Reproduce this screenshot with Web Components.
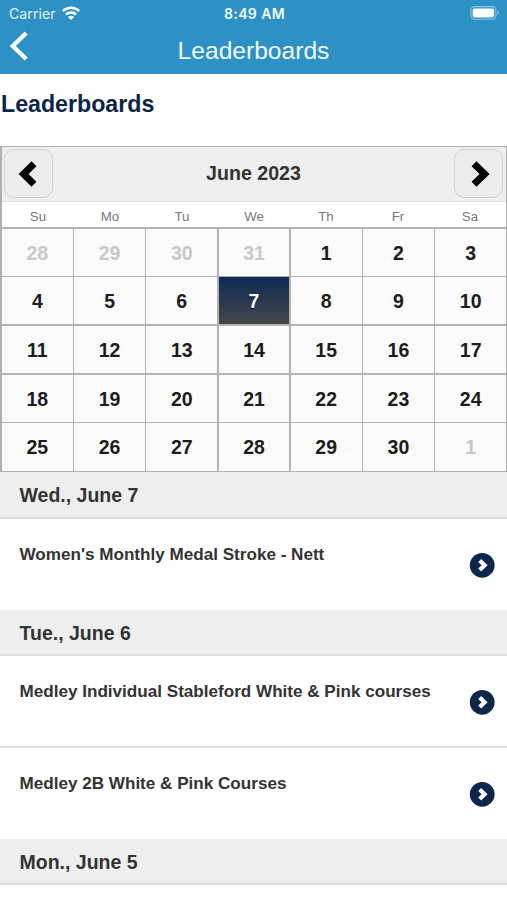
<!DOCTYPE html>
<html lang="en">
<head>
<meta charset="utf-8">
<meta name="viewport" content="width=device-width, initial-scale=1">
<title>Leaderboards</title>
<style>
    body {
        margin: 0;
        height: 900px;
        overflow: hidden;
        background: #fff;
        color: #333;
        font-family: "Liberation Sans", Arial, sans-serif;
    }
</style>
</head>
<body>
    <app-header>Leaderboards</app-header>
    <page-title>Leaderboards</page-title>
    <month-calendar first="28" previous="31" days="30" selected="7">June 2023</month-calendar>
    <day-group label="Wed., June 7">
        <event-row>Women's Monthly Medal Stroke - Nett</event-row>
    </day-group>
    <day-group label="Tue., June 6">
        <event-row>Medley Individual Stableford White &amp; Pink courses</event-row>
        <event-row>Medley 2B White &amp; Pink Courses</event-row>
    </day-group>
    <day-group label="Mon., June 5"></day-group>

<script>
class AppHeader extends HTMLElement {
    constructor() {
        super();
        this.attachShadow({ mode: 'open' });
        this.shadowRoot.innerHTML = `
            <style>
                :host {
                    display: block;
                    box-sizing: border-box;
                    height: 74px;
                    background: #2e91c5;
                    color: #fff;
                }
                svg { display: block; }
                .status, .bar {
                    display: grid;
                    grid-template-columns: 1fr auto 1fr;
                    align-items: center;
                }
                .status {
                    height: 27px;
                    padding: 0 7px 0 9px;
                    font: 14px/27px Inter, sans-serif;
                }
                .carrier { display: flex; align-items: center; gap: 6px; letter-spacing: 0.12px; color: #e4f5fc; }
                .carrier svg { margin-top: -2px; }
                .time { font-weight: 600; font-size: 14px; letter-spacing: 0.4px; color: #effaff; }
                .battery { justify-self: end; margin-top: -1px; }
                .bar { height: 47px; padding: 0 9px; }
                .back { align-self: start; padding-top: 4px; }
                .title { font-size: 24.6px; line-height: 47px; color: #f2fbff; }
            </style>
            <div class="status">
                <div class="carrier">
                    <span>Carrier</span>
                    <svg width="18" height="14" viewBox="0 0 18 14" fill="none" stroke="#fff" stroke-width="2.5">
                        <path d="M.8 5.1a11.6 11.6 0 0 1 16.4 0M3.9 8.5a7.2 7.2 0 0 1 10.2 0"/>
                        <path d="M9 14 6 11a4.2 4.2 0 0 1 6 0Z" fill="#fff" stroke="none"/>
                    </svg>
                </div>
                <div class="time">8:49 AM</div>
                <svg class="battery" width="30" height="14" viewBox="0 0 30 14">
                    <rect x=".9" y=".6" width="25" height="12.6" rx="3.6" fill="none" stroke="#8cc5e3" stroke-width="1.1"/>
                    <rect x="2.7" y="2.4" width="21.4" height="9" rx="1.8" fill="#fff"/>
                    <path d="M27.4 4.7v4.4c1.9-.7 1.9-3.7 0-4.4Z" fill="#8cc5e3"/>
                </svg>
            </div>
            <div class="bar">
                <svg class="back" width="20" height="30" viewBox="0 0 20 30" fill="none" stroke="#fff" stroke-width="4.2">
                    <path d="M17.2 2 3.8 15 17.2 28"/>
                </svg>
                <div class="title"><slot></slot></div>
            </div>
        `;
    }
}

class PageTitle extends HTMLElement {
    constructor() {
        super();
        this.attachShadow({ mode: 'open' });
        this.shadowRoot.innerHTML = `
            <style>
                :host {
                    display: block;
                    box-sizing: border-box;
                    height: 72px;
                    padding: 16px 0 0 1px;
                    font-size: 23.2px;
                    line-height: 28px;
                    font-weight: bold;
                    color: #0c2448;
                }
            </style>
            <slot></slot>
        `;
    }
}

class MonthCalendar extends HTMLElement {
    constructor() {
        super();
        this.attachShadow({ mode: 'open' });
        this.shadowRoot.innerHTML = `
            <style>
                :host {
                    display: block;
                    box-sizing: border-box;
                    height: 326px;
                    border: solid #b0b0b0;
                    border-width: 1px 1px 0 2px;
                }
                .head {
                    display: flex;
                    align-items: center;
                    justify-content: space-between;
                    box-sizing: border-box;
                    height: 55px;
                    padding: 0 3px 1px 2px;
                    background: #eee;
                    border-bottom: 1px solid #ddd;
                    font-size: 19.6px;
                    font-weight: bold;
                }
                button {
                    display: flex;
                    align-items: center;
                    justify-content: center;
                    box-sizing: border-box;
                    width: 49px;
                    height: 49px;
                    padding: 0;
                    border: 1px solid #d0d0d0;
                    border-radius: 10px;
                    background: #ececec;
                }
                button svg { fill: none; stroke: #000; stroke-width: 7; stroke-linejoin: miter; }
                .week, .days { display: grid; grid-template-columns: repeat(7, 1fr); text-align: center; }
                .week {
                    height: 25px;
                    font-size: 13.3px;
                    line-height: 30px;
                    color: #777;
                }
                .days {
                    height: 245px;
                    box-sizing: border-box;
                    grid-template-rows: repeat(5, 1fr);
                    gap: 1.5px;
                    padding: 1.5px 0;
                    background: #b2b2b2;
                }
                .day {
                    display: flex;
                    align-items: center;
                    justify-content: center;
                    padding-top: 2px;
                    background: #fafafa;
                    color: #1c1c1c;
                    font-size: 19.5px;
                    font-weight: bold;
                }
                .other { color: #c8c8c8; }
                .selected {
                    color: #fff;
                    background: linear-gradient(#0d2b55, #44464c);
                    text-shadow: 0 1px 1px #000;
                }
            </style>
            <div class="head">
                <button aria-label="Previous">
                    <svg width="22" height="30" viewBox="0 0 22 30"><path d="M16 4.8 5.6 15 16 25.2"/></svg>
                </button>
                <slot></slot>
                <button aria-label="Next">
                    <svg width="23" height="30" viewBox="0 0 23 30"><path d="M7 4.8 17.6 15 7 25.2"/></svg>
                </button>
            </div>
            <div class="week"></div>
            <div class="days"></div>
        `;

        this.weekElement = this.shadowRoot.querySelector('.week');
        this.daysElement = this.shadowRoot.querySelector('.days');
    }

    connectedCallback() {
        this.weekElement.innerHTML = ['Su', 'Mo', 'Tu', 'We', 'Th', 'Fr', 'Sa']
            .map(name => `<span>${name}</span>`).join('');
        this.renderDays();
    }

    // Five weeks, padded with days of the neighbouring months
    renderDays() {
        const first = Number(this.getAttribute('first'));
        const previous = Number(this.getAttribute('previous'));
        const total = Number(this.getAttribute('days'));
        const selected = Number(this.getAttribute('selected'));
        const lead = previous - first + 1;
        let html = '';

        for (let i = 0; i < 35; i++) {
            const day = i - lead + 1;
            if (day < 1) {
                html += `<div class="day other">${first + i}</div>`;
            } else if (day > total) {
                html += `<div class="day other">${day - total}</div>`;
            } else {
                html += `<div class="day${day === selected ? ' selected' : ''}">${day}</div>`;
            }
        }
        this.daysElement.innerHTML = html;
    }
}

class DayGroup extends HTMLElement {
    constructor() {
        super();
        this.attachShadow({ mode: 'open' });
        this.shadowRoot.innerHTML = `
            <style>
                :host { display: block; }
                :host(:first-of-type) h2 { height: 47px; }
                h2 {
                    box-sizing: border-box;
                    height: 46px;
                    margin: 0;
                    padding-left: 19.5px;
                    background: #eee;
                    border-bottom: 2px solid #ddd;
                    font-size: 19.5px;
                    line-height: 46px;
                }
            </style>
            <h2></h2>
            <slot></slot>
        `;
    }

    connectedCallback() {
        this.shadowRoot.querySelector('h2').textContent = this.getAttribute('label');
    }
}

class EventRow extends HTMLElement {
    constructor() {
        super();
        this.attachShadow({ mode: 'open' });
        this.shadowRoot.innerHTML = `
            <style>
                :host {
                    display: flex;
                    justify-content: space-between;
                    align-items: flex-start;
                    box-sizing: border-box;
                    height: 92px;
                    padding: 25px 12px 0 19.5px;
                    border-bottom: 2px solid #ddd;
                    font-size: 17.1px;
                    line-height: 22px;
                    font-weight: bold;
                }
                :host(:last-child) { height: 91px; border-bottom: 0; }
                svg { display: block; margin-top: 8px; }
            </style>
            <span><slot></slot></span>
            <svg width="26" height="26" viewBox="0 0 26 26">
                <circle cx="13.2" cy="13.3" r="12.4" fill="#0d264b"/>
                <path d="M10.7 8.5 15.6 13.3 10.7 18.1" fill="none" stroke="#fff" stroke-width="4.2"/>
            </svg>
        `;
    }
}

customElements.define('app-header', AppHeader);
customElements.define('page-title', PageTitle);
customElements.define('month-calendar', MonthCalendar);
customElements.define('day-group', DayGroup);
customElements.define('event-row', EventRow);
</script>
</body>
</html>
